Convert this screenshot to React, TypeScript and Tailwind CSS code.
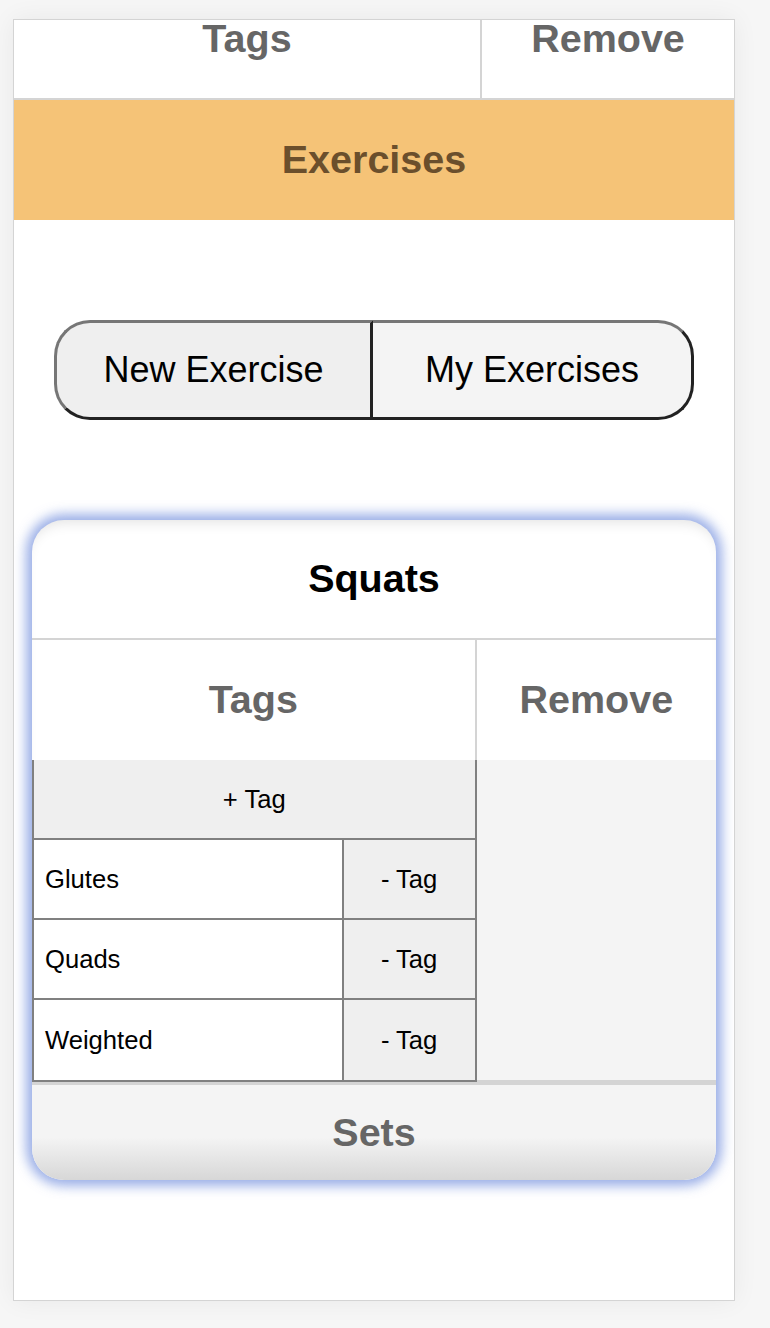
const font = { fontFamily: '"Liberation Sans", Arial, Helvetica, sans-serif' };

const tags = ["Glutes", "Quads", "Weighted"];

const HeaderRow = ({ className = "" }: { className?: string }) => (
  <div className={`flex h-[120px] shrink-0 ${className}`}>
    <div className="w-[65%] flex items-center justify-center border-r-2 border-[#d4d4d4] text-[39.5px] leading-none font-bold text-[#666]">
      Tags
    </div>
    <div className="flex-1 flex items-center justify-center text-[39.5px] leading-none font-bold text-[#666]">
      Remove
    </div>
  </div>
);

const ExerciseCard = () => (
  <div className="mx-[18px] rounded-[32px] overflow-hidden bg-white shadow-[0_0_12px_6px_rgba(130,155,225,0.8),inset_0_10px_14px_-8px_rgba(0,0,0,0.12)]">
    {/* title */}
    <div className="h-[120px] flex items-center justify-center border-b-2 border-[#d4d4d4] text-[39.5px] font-bold text-black">
      Squats
    </div>

    <HeaderRow />

    {/* tags table + remove column */}
    <div className="flex h-[320px]">
      <div className="w-[65%]">
        <div className="border-x-2 border-b-2 border-[#808080] text-[25.6px] text-black">
          <button className="w-full h-[80px] bg-[#efefef] border-b-2 border-[#808080] flex items-center justify-center">
            + Tag
          </button>
          {tags.map((tag, i) => (
            <div
              key={tag}
              className={`flex h-[80px] ${i < tags.length - 1 ? "border-b-2 border-[#808080]" : "h-[78px]"}`}
            >
              <div className="flex-1 bg-white flex items-center pl-[11px] border-r-2 border-[#808080]">
                {tag}
              </div>
              <button className="w-[131px] bg-[#efefef] flex items-center justify-center">
                - Tag
              </button>
            </div>
          ))}
        </div>
      </div>
      <div className="flex-1 bg-[#f4f4f4]" />
    </div>

    {/* sets */}
    <div className="h-[100px] border-t-[5px] border-[#d4d4d4] bg-[linear-gradient(to_bottom,#f4f4f4_55%,#d7d7d7)] flex items-center justify-center text-[39.5px] font-bold text-[#666]">
      Sets
    </div>
  </div>
);

export default function App() {
  return (
    <div className="min-h-screen bg-[#f6f6f6] pt-[19px] pl-[13px]" style={font}>
      <div className="w-[722px] h-[1282px] bg-white border border-[#d4d4d4] overflow-hidden shadow-[0_0_24px_rgba(0,0,0,0.06)]">
        <div className="-mt-[40px] flex flex-col">
          {/* previous card's header row, scrolled partly out of view */}
          <HeaderRow className="border-b-2 border-[#d4d4d4]" />

          <div className="h-[120px] bg-[#f5c377] flex items-center justify-center text-[39.5px] font-bold text-[#6b4f2c]">
            Exercises
          </div>

          {/* toggle */}
          <div className="mt-[100px] mx-auto w-[640px] h-[100px] flex text-[36px] text-black">
            <button className="w-[319px] bg-[#efefef] rounded-l-[36px] border-[3px] border-t-[#767676] border-l-[#767676] border-b-[#222] border-r-[#222]">
              New Exercise
            </button>
            <button className="flex-1 bg-[#f4f4f4] rounded-r-[36px] border-[3px] border-l-0 border-t-[#767676] border-b-[#222] border-r-[#222]">
              My Exercises
            </button>
          </div>

          <div className="mt-[100px]">
            <ExerciseCard />
          </div>
        </div>
      </div>
    </div>
  );
}
